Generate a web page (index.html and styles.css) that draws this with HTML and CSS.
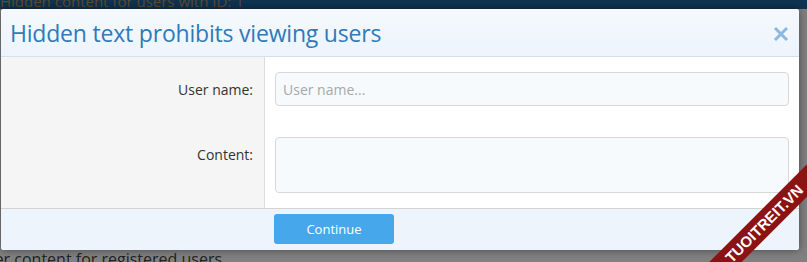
FILE: index.html
```html
<!DOCTYPE html>
<html lang="en">
<head>
    <meta charset="UTF-8">
    <title>Hidden text prohibits viewing users</title>
    <link rel="stylesheet" href="styles.css">
</head>
<body>
    <div class="page-top">Hidden content for users with ID: 1</div>

    <div class="overlay">
        <div class="overlay-title">
            <h2>Hidden text prohibits viewing users</h2>
            <svg class="close" width="16" height="16" viewBox="0 0 16 16">
                <path d="M2 2 L14 14 M14 2 L2 14" stroke="#8cb9dd" stroke-width="3" fill="none"/>
            </svg>
        </div>

        <div class="form-body">
            <div class="row">
                <div class="label label-mid">User name:</div>
                <div class="field"><input class="input" type="text" placeholder="User name..."></div>
            </div>
            <div class="row">
                <div class="label label-top">Content:</div>
                <div class="field field-second"><textarea class="input textarea"></textarea></div>
            </div>
        </div>

        <div class="form-footer">
            <div class="footer-gap"></div>
            <button class="button">Continue</button>
        </div>
    </div>

    <div class="page-under">Hider content for registered users</div>

    <div class="ribbon">TUOITREIT.VN</div>
</body>
</html>
```

FILE: styles.css
```css
body {
    margin: 0;
    height: 262px;
    overflow: hidden;
    position: relative;
    background-color: #808080;
    font-family: "Open Sans", "Noto Sans", sans-serif;
    color: #333;
}
.page-top {
    height: 9px;
    overflow: hidden;
    background-color: #0f3352;
    color: #5e4c2e;
    font-size: 15px;
    line-height: 0;
    padding-top: 1px;
    box-sizing: border-box;
}
.overlay {
    margin-left: 1px;
    width: 798px;
    border-radius: 3px;
    overflow: hidden;
    background-color: #fff;
    box-shadow: 0 0 8px rgba(0, 0, 0, 0.45);
    position: relative;
    z-index: 1;
}
.overlay-title {
    height: 47px;
    display: flex;
    align-items: center;
    justify-content: space-between;
    padding: 0 10px 0 9px;
    background: linear-gradient(#f5f9fd, #edf4fc);
    border-bottom: 1px solid #d8dfe6;
}
.overlay-title h2 {
    margin: 0;
    font-weight: normal;
    font-size: 23px;
    color: #2f7ab8;
    letter-spacing: -0.2px;
}
.close {
    display: block;
    margin-top: 2px;
}
.form-body {
    display: flex;
    flex-direction: column;
    border-bottom: 1px solid #d3d3d3;
}
.row {
    display: flex;
}
.label {
    flex-shrink: 0;
    width: 252px;
    padding-right: 11px;
    background-color: #f5f5f5;
    border-right: 1px solid #dcdcdc;
    text-align: right;
    font-size: 14px;
    color: #333;
}
.label-mid {
    padding-top: 23px;
}
.label-top {
    padding-top: 39px;
}
.field {
    flex: 1;
    padding: 15px 10px 0 10px;
}
.field-second {
    padding-top: 31px;
    padding-bottom: 15px;
}
.input {
    display: block;
    box-sizing: border-box;
    width: 100%;
    height: 34px;
    border: 1px solid #d8d8d8;
    border-radius: 4px;
    background-color: #f7fafd;
    font-family: inherit;
    font-size: 14px;
    color: #333;
    padding: 0 7px;
    margin: 0;
    outline: none;
}
.input::placeholder {
    color: #a8a8a8;
}
.textarea {
    height: 56px;
    resize: none;
}
.form-footer {
    display: flex;
    height: 41px;
    background-color: #edf4fc;
    padding-top: 5px;
    box-sizing: border-box;
}
.footer-gap {
    width: 273px;
}
.button {
    width: 120px;
    height: 30px;
    border: none;
    border-radius: 3px;
    background-color: #47a7eb;
    color: #fff;
    font-family: inherit;
    font-size: 13px;
}
.page-under {
    margin-left: -31px;
    margin-top: -2px;
    font-size: 16px;
    color: #222;
    white-space: nowrap;
}
.ribbon {
    position: absolute;
    left: 664px;
    top: 212px;
    width: 200px;
    height: 23px;
    line-height: 23px;
    transform: rotate(-45deg);
    background-color: #8c1313;
    color: #fff;
    text-align: center;
    font-family: "Liberation Sans", sans-serif;
    font-weight: bold;
    font-size: 15px;
    z-index: 2;
}
```
